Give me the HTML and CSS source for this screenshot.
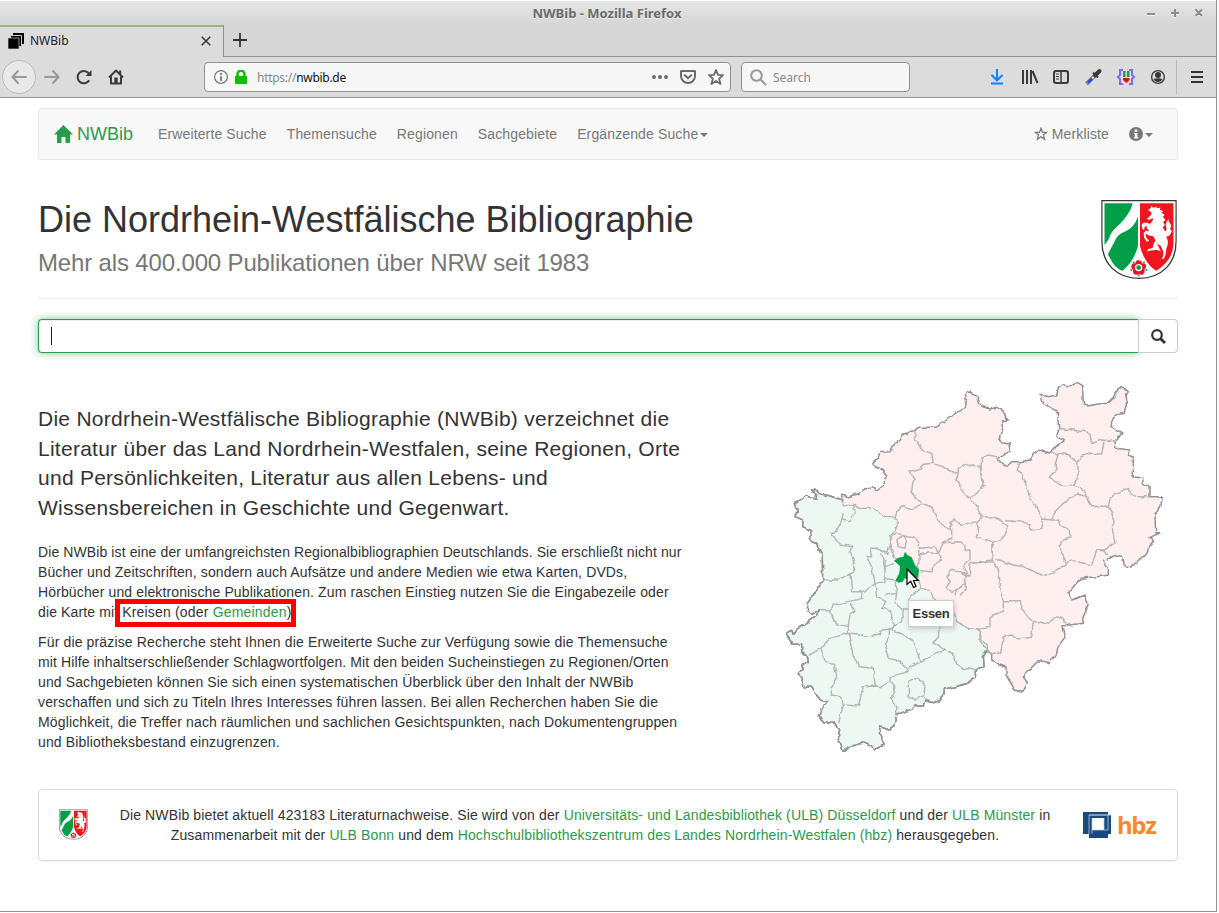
FILE: index.html
```html
<!DOCTYPE html>
<html lang="de">
<head>
<meta charset="utf-8">
<title>NWBib</title>
<link rel="stylesheet" href="styles.css">
</head>
<body>
<svg width="0" height="0" class="defs">
  <symbol id="wappen" viewBox="0 0 226 236">
    <path d="M2 2H224V122C224 190 180 234 113 234S2 190 2 122Z" fill="#fff" stroke="#393536" stroke-width="4"/>
    <path d="M10 10H94C90 30 78 45 68 58C50 80 35 85 26 108C23 118 16 126 10 135Z" fill="#009e49"/>
    <path d="M110 50V138C102 165 90 190 64 211C46 207 34 190 20 162C26 150 33 138 40 125C48 100 66 98 82 88C98 78 104 64 110 50Z" fill="#009e49"/>
    <path d="M116 10H216V130C214 170 194 192 165 211C138 197 124 166 116 138Z" fill="#ef1620"/>
    <path d="M140 30L148 24L150 17L155 23L164 20L166 24L177 23L175 30L186 33L180 38L190 45L184 50L192 60L185 66L190 75L184 82L190 92C194 96 197 88 194 80C190 70 197 65 201 56C200 69 211 70 209 81L205 86L211 92C208 105 200 112 193 108C202 120 200 135 195 144L192 164C190 172 186 178 180 175L185 169L186 155L178 137L164 130L170 136L178 154C166 145 150 151 137 153L140 147L154 143L156 132L162 122L158 111C152 105 146 108 139 104L132 101L135 113L143 122L136 125L128 112L127 98L134 91L144 94L136 83L136 77L130 81L128 90L122 84L121 75L126 68L137 68L146 72L154 61L155 54L143 60L137 56L149 45L151 37Z" fill="#fff"/>
    <g fill="#e6142a"><circle cx="112" cy="190" r="10"/><circle cx="100" cy="199" r="10"/><circle cx="105" cy="213" r="10"/><circle cx="120" cy="213" r="10"/><circle cx="124" cy="199" r="10"/></g>
    <circle cx="112" cy="202" r="11" fill="#fff"/><circle cx="112" cy="202" r="7" fill="#009e49"/>
    <g fill="#009e49"><circle cx="97" cy="187" r="3"/><circle cx="128" cy="187" r="3"/><circle cx="90" cy="209" r="3"/><circle cx="135" cy="209" r="3"/><circle cx="112" cy="225" r="3"/></g>
  </symbol>
</svg>
<div class="window">
  <header class="titlebar">
    <span class="title">NWBib - Mozilla Firefox</span>
    <svg class="winbtns" width="58" height="12" viewBox="0 0 58 12" fill="none" stroke="#8c8c8c" stroke-width="2"><path d="M0 7H8M24 6H32M28 2V10M48.500 2.500L55 9M55 2.500L48.500 9"/></svg>
  </header>
  <div class="tabs">
    <div class="tab">
      <svg width="16" height="16" viewBox="0 0 16 16"><path d="M5 0H16V11H5Z"/><path d="M2.500 2.500H13.500V13.500H2.500Z" stroke="#ccc"/><path d="M0 5H11V16H0Z" stroke="#ccc" stroke-width=".7"/></svg>
      <span>NWBib</span>
      <svg class="tabclose" width="10" height="10" viewBox="0 0 10 10" fill="none" stroke="#3b3b3b" stroke-width="1.600"><path d="M.7.7L9.300 9.300M9.300.7L.7 9.300"/></svg>
    </div>
    <div class="newtab"><svg width="14" height="14" viewBox="0 0 14 14" stroke="#333" stroke-width="1.800"><path d="M0 7H14M7 0V14"/></svg></div>
  </div>
  <div class="toolbar">
    <div class="back"><svg width="16" height="14" viewBox="0 0 16 14" fill="none" stroke="#999" stroke-width="2" stroke-linecap="round" stroke-linejoin="round"><path d="M15 7H1.500M7 1L1.500 7L7 13"/></svg></div>
    <svg class="fwd" width="16" height="14" viewBox="0 0 16 14" fill="none" stroke="#999" stroke-width="2" stroke-linecap="round" stroke-linejoin="round"><path d="M1 7H14.500M9 1L14.500 7L9 13"/></svg>
    <svg class="reload" width="16" height="16" viewBox="0 0 16 16" fill="none" stroke="#3a3a3a" stroke-width="2"><path d="M13.200 11.200A6.200 6.200 0 1 1 12.500 4"/><path d="M15.500 1V7H9.500Z" fill="#3a3a3a" stroke="none"/></svg>
    <svg class="home" width="16" height="16" viewBox="0 0 16 16" fill="none" stroke="#3a3a3a" stroke-width="2" stroke-linejoin="round"><path d="M1 8.500L8 1.500L15 8.500M3 7.500V14.500H13V7.500"/><path d="M6.300 14V8.500H9.700V14" fill="#3a3a3a" stroke="none"/><path d="M12.200 1.500V5"/></svg>
    <div class="field url">
      <svg width="14" height="14" viewBox="0 0 14 14" fill="none" stroke="#777"><circle cx="7" cy="7" r="6.400" stroke-width="1.200"/><path d="M7 6.300V11M7 3V5" stroke-width="1.800"/></svg>
      <svg class="lock" width="12" height="14" viewBox="0 0 12 14"><path d="M0 6H12V14H1Q0 14 0 13Z" fill="#12bc00"/><path d="M2.500 7V4A3.500 3.200 0 0 1 9.500 4V7" fill="none" stroke="#12bc00" stroke-width="2.400"/></svg>
      <span class="addr"><i>https://</i>nwbib.de</span>
      <svg class="dots" width="16" height="4" viewBox="0 0 16 4" fill="#6b6b6b"><circle cx="2" cy="2" r="2"/><circle cx="8" cy="2" r="2"/><circle cx="14" cy="2" r="2"/></svg>
      <svg class="pocket" width="16" height="14" viewBox="0 0 16 14" fill="none" stroke="#6b6b6b" stroke-width="2" stroke-linejoin="round" stroke-linecap="round"><path d="M1 1H15V6A7 7 0 0 1 1 6ZM4.800 5.200L8 8.200L11.200 5.200"/></svg>
      <svg class="star" width="16" height="16" viewBox="0 0 16 16" fill="none" stroke="#6b6b6b" stroke-width="1.800" stroke-linejoin="round"><path d="M8 1L10 5.800L15 6.200L11.200 9.700L12.500 15L8 12L3.500 15L4.800 9.700L1 6.200L6 5.800Z"/></svg>
    </div>
    <div class="field search">
      <svg width="17" height="17" viewBox="0 0 17 17" fill="none" stroke="#999" stroke-width="2"><circle cx="6.500" cy="6.500" r="5.300"/><path d="M10.300 10.300L16 16"/></svg>
      <span>Search</span>
    </div>
    <svg class="tools" width="176" height="20" viewBox="0 0 176 20" fill="none" stroke="#3a3a3a">
      <path d="M7 2V13M1.500 8L7 13.300L12.500 8M1 16.500H13" stroke="#0a84ff" stroke-width="2"/>
      <path d="M33 3V17M37 3V17M41 3V17M42.500 4L47.500 16" stroke-width="2"/>
      <rect x="64" y="4" width="14" height="12" rx="2" stroke-width="2"/><path d="M71 4V16" stroke-width="1.500"/><path d="M66 7H69M66 9.500H69M66 12H69"/>
      <path d="M96.500 17L105 8.500" stroke="#858585" stroke-width="4"/><path d="M98.500 15L104 9.500" stroke="#dcdcdc" stroke-width="2"/><path d="M98 15.500L102 11.500" stroke="#2742e0" stroke-width="2.500"/>
      <path d="M105 8.500L109.500 4" stroke-width="4" stroke-linecap="round"/><path d="M103 5.500L108 10.500" stroke-width="2"/>
      <g stroke="#7b6fe8" stroke-width="2"><path d="M133 3H130V8L128 10L130 12V17H133M139 3H142V8L144 10L142 12V17H139"/></g>
      <path d="M134.300 4V10M138.200 4V10" stroke="#1c9b38" stroke-width="2.400"/><path d="M133 11H139.500V13L136.300 16L133 13Z" fill="#f00" stroke="none"/>
      <circle cx="168" cy="10" r="6.400" stroke-width="1.400"/><g fill="#3a3a3a" stroke="none"><circle cx="168" cy="8" r="3"/><path d="M163.500 12Q168 10.500 172.500 12Q171 15 168 15T163.500 12Z"/></g>
    </svg>
    <div class="menu"><svg width="12" height="12" viewBox="0 0 12 12" stroke="#333" stroke-width="2"><path d="M0 1H12M0 6H12M0 11H12"/></svg></div>
  </div>
  <main class="page">
    <nav class="navbar">
      <a class="brand"><svg width="19" height="18" viewBox="0 0 19 18"><path d="M9.500 0L19 9.500H16V18H11.500V12H7.500V18H3V9.500H0Z" fill="#2c9a4b"/></svg><span>NWBib</span></a>
      <a>Erweiterte Suche</a><a>Themensuche</a><a>Regionen</a><a>Sachgebiete</a><a>Ergänzende Suche<b class="caret"></b></a>
      <a class="merk"><svg width="14" height="14" viewBox="0 0 14 14" fill="none" stroke="#777" stroke-width="1.200"><path d="M7 1.300L8.500 5.300H12.800L9.400 8L10.700 12.300L7 9.800L3.300 12.300L4.600 8L1.200 5.300H5.500Z"/></svg>Merkliste</a>
      <a class="info"><svg width="14" height="14" viewBox="0 0 14 14"><circle cx="7" cy="7" r="7" fill="#777"/><path d="M5.600 2.500H8.400V4.800H5.600ZM5 6H8.400V10H9.300V11.500H4.900V10H5.800V7.300H5Z" fill="#f8f8f8"/></svg><b class="caret"></b></a>
    </nav>
    <div class="head">
      <div><h1>Die Nordrhein-Westfälische Bibliographie</h1><p class="sub">Mehr als 400.000 Publikationen über NRW seit 1983</p></div>
      <svg class="coat" width="76" height="79" viewBox="0 0 226 236"><use href="#wappen"/></svg>
    </div>
    <div class="searchrow"><div class="input"><span class="textcaret"></span></div><div class="go"><svg width="15" height="15" viewBox="0 0 15 15" fill="none" stroke="#333" stroke-width="2.200"><circle cx="6" cy="6" r="4.800"/><path d="M9.400 9.400L14 14" stroke-width="2.800"/></svg></div></div>
    <div class="content">
      <div class="copy">
        <p class="lead">Die Nordrhein-Westfälische Bibliographie (NWBib) verzeichnet die<br>Literatur über das Land Nordrhein-Westfalen, seine Regionen, Orte<br>und Persönlichkeiten, Literatur aus allen Lebens- und<br>Wissensbereichen in Geschichte und Gegenwart.</p>
        <p class="intro"><span class="tight">Die NWBib ist eine der umfangreichsten Regionalbibliographien Deutschlands. Sie erschließt nicht nur</span><br>Bücher und Zeitschriften, sondern auch Aufsätze und andere Medien wie etwa Karten, DVDs,<br>Hörbücher und elektronische Publikationen. Zum raschen Einstieg nutzen Sie die Eingabezeile oder<br>die Karte mit <span class="mark">Kreisen (oder <a>Gemeinden</a>)</span></p>
        <p class="detail">Für die präzise Recherche steht Ihnen die Erweiterte Suche zur Verfügung sowie die Themensuche<br><span class="tight">mit Hilfe inhaltserschließender Schlagwortfolgen. Mit den beiden Sucheinstiegen zu Regionen/Orten</span><br><span class="tight">und Sachgebieten können Sie sich einen systematischen Überblick über den Inhalt der NWBib</span><br>verschaffen und sich zu Titeln Ihres Interesses führen lassen. Bei allen Recherchen haben Sie die<br>Möglichkeit, die Treffer nach räumlichen und sachlichen Gesichtspunkten, nach Dokumentengruppen<br>und Bibliotheksbestand einzugrenzen.</p>
      </div>
      <div class="map">
        <svg width="390" height="390" viewBox="0 0 1170 1170" fill="none" stroke-linejoin="round">
          <defs><filter id="rough" x="0" y="0" width="100%" height="100%" color-interpolation-filters="sRGB"><feTurbulence type="fractalNoise" baseFrequency=".045" numOctaves="2" seed="4"/><feDisplacementMap in="SourceGraphic" scale="13" xChannelSelector="R" yChannelSelector="G"/></filter></defs>
          <g filter="url(#rough)">
          <path fill="#ffefef" stroke="#929292" stroke-width="4.500" d="M185 375L205 380 240 368 275 350 290 360 310 345 322 320 305 300 275 283 280 272 295 265 300 247 330 245 345 220 360 212 370 192 400 185 415 172 470 172 485 160 500 150 525 130 555 115 562 92 553 85 565 65 590 75 600 100 630 117 650 112 670 123 675 145 685 150 668 152 670 170 665 185 658 205 665 218 692 222 690 245 653 265 665 283 682 288 695 275 720 275 750 270 760 250 775 240 812 250 820 235 850 212 830 200 836 175 832 125 815 115 790 100 783 73 805 80 830 75 835 55 848 45 865 50 892 37 908 47 910 105 925 108 950 103 985 100 1000 85 1015 55 1030 52 1045 65 1038 80 1042 98 1035 110 1030 130 1010 135 995 155 993 170 1025 188 1012 212 1005 215 1008 235 1050 240 1045 258 1060 265 1060 320 1088 325 1090 340 1110 350 1110 380 1147 380 1143 405 1125 435 1127 488 1142 488 1110 502 1120 512 1105 535 1100 555 1070 570 1068 582 1045 590 1032 585 1028 560 1010 555 968 572 985 595 985 615 950 620 902 625 880 650 863 672 878 690 915 675 925 705 908 745 910 760 845 768 855 800 835 830 830 850 810 878 775 872 730 918 742 940 728 968 705 960 678 915 678 890 658 885 635 870 635 850 622 840 610 860 612 888 585 905 588 920 560 940 525 950 490 958 485 990 460 998 435 992 430 1005 405 1005 395 1018 350 1032 345 1070 330 1080 300 1070 298 1090 312 1125 280 1140 275 1130 250 1118 205 1130 190 1145 182 1120 172 1115 180 1100 175 1080 165 1060 130 1058 118 1038 125 1020 143 995 120 990 110 975 95 952 72 950 65 925 53 912 70 895 65 888 85 875 82 855 65 845 65 822 35 823 32 810 18 790 35 780 40 795 55 775 85 755 110 735 115 722 95 730 83 720 82 700 100 675 128 635 127 555 110 525 88 505 95 482 68 470 70 450 45 440 55 420 43 400 58 392 78 378 85 380 108 388 110 372 95 360 115 362 120 372 150 378 185 390Z"/>
          <path fill="#edf8f3" stroke="#b5b5b5" stroke-width="3.800" d="M185 390L195 408 220 402 232 412 265 412 300 425 315 440 345 440 355 455 345 485 333 495 330 515 337 535 345 560 412 625 425 655 450 660 460 685 480 700 525 735 530 755 565 775 595 775 605 805 622 825 622 840 610 860 612 888 585 905 588 920 560 940 525 950 490 958 485 990 460 998 435 992 430 1005 405 1005 395 1018 350 1032 345 1070 330 1080 300 1070 298 1090 312 1125 280 1140 275 1130 250 1118 205 1130 190 1145 182 1120 172 1115 180 1100 175 1080 165 1060 130 1058 118 1038 125 1020 143 995 120 990 110 975 95 952 72 950 65 925 53 912 70 895 65 888 85 875 82 855 65 845 65 822 35 823 32 810 18 790 35 780 40 795 55 775 85 755 110 735 115 722 95 730 83 720 82 700 100 675 128 635 127 555 110 525 88 505 95 482 68 470 70 450 45 440 55 420 43 400 58 392 78 378 85 380 108 388 110 372 95 360 115 362 120 372 150 378Z"/>
          <path stroke="#929292" stroke-width="4.500" d="M622 840L610 860 612 888 585 905 588 920 560 940 525 950 490 958 485 990 460 998 435 992 430 1005 405 1005 395 1018 350 1032 345 1070 330 1080 300 1070 298 1090 312 1125 280 1140 275 1130 250 1118 205 1130 190 1145 182 1120 172 1115 180 1100 175 1080 165 1060 130 1058 118 1038 125 1020 143 995 120 990 110 975 95 952 72 950 65 925 53 912 70 895 65 888 85 875 82 855 65 845 65 822 35 823 32 810 18 790 35 780 40 795 55 775 85 755 110 735 115 722 95 730 83 720 82 700 100 675 128 635 127 555 110 525 88 505 95 482 68 470 70 450 45 440 55 420 43 400 58 392 78 378 85 380 108 388 110 372 95 360 115 362 120 372 150 378 185 390"/>
          <g stroke="#b7b5b5" stroke-width="4.300">
            <path d="M405 182V205L420 225 425 240 455 250 460 280M345 440L350 425 370 410 390 418 430 400 405 385 395 360 402 325 390 305 420 295 430 283 460 280 500 295 510 303 535 310 535 295 560 280 590 290 603 292 605 320 612 345 590 370 570 385 545 365 535 335 527 330 535 310M603 292L605 265 625 255 655 262M570 385L590 410 605 442M430 400L455 412 470 440 480 460 515 480 510 455 520 447 545 463 590 455 605 442 640 440 665 455 685 470 675 495 660 512 638 520M590 455L595 480 588 500 610 505 635 515 637 570 572 578M515 480V505L485 518"/>
            <g transform="translate(270 420)"><path d="M65 80L80 70 100 75 110 90 105 115 85 110 80 90 95 78M65 80L60 100 65 125 75 145M100 75L130 80 145 100 147 145 145 180M148 115L180 112 195 108 205 130 215 150 190 165 185 185 150 182M205 130L220 98 270 95 285 105 285 120 300 125 300 150 280 165 290 190 240 180 230 200 240 215 228 235 245 245 260 235 255 255M145 135L180 128 205 130M290 190L285 220 270 232 260 235"/></g>
            <g transform="translate(600)"><path d="M235 175L280 180 300 185 315 180 330 195 335 220 360 210 408 213M215 250H240L265 255 280 268 293 275 300 262 330 250 365 252 372 215M235 252L225 285 232 295 208 325 250 347 280 345 295 320 293 275M120 275L112 300 125 310 140 350 150 385 170 410 188 447 215 450 220 430 250 400 290 372 322 380 300 350 280 345M322 380L335 410 385 408 390 385 408 370 445 355 450 370 470 380 510 380M385 408L400 430 397 480 405 520 370 542 350 540 345 560 335 585 280 572 258 577 238 530 245 515 270 500 268 480 240 468 235 450 215 450M188 447L182 475 152 480 150 462 120 455 75 452M0 285L5 330 15 350 0 360"/></g>
            <g transform="translate(540 510)"><path d="M97 10V60L112 85 120 150 130 182 185 182 185 210 220 243 255 253 280 235 300 230 320 250M105 60H120L160 75 190 80 245 105 285 95 320 70M130 182V212L90 230 90 262 55 268 62 300 82 330 100 340 122 340 130 290 155 285 170 297 215 292 220 243M0 250L25 262 55 268M30 70L97 65M30 70L28 105 0 100M18 105L15 150 0 165M405 30L430 30 440 45"/></g>
            <path d="M220 402L225 425 210 455 185 450 190 432M185 450L170 485 152 492 180 525 215 530 210 545 220 570 222 600M265 570L262 560 275 560 270 535 290 535 320 550 330 515M305 550L315 600"/>
            <g transform="translate(0 570)"><path d="M128 60H175L210 40 225 30 220 0M210 40L215 95 245 95 275 80 285 70 275 20 265 0M315 0V65L285 70M315 20L345 10M315 55L345 60 350 100 345 130 370 150M245 95L248 115 190 128 160 135 152 152 118 152M152 152L165 190 205 200 210 165 225 155 212 130M285 70L290 110 318 125 305 145 335 150 335 175 345 195 325 208 305 210 300 222 265 232 235 222 205 220 205 200M205 220L150 235 122 265 85 288M122 265L135 305 160 310 170 350 152 385 155 405 180 410 190 435 235 438 250 380 285 378 280 325 240 320 220 290 205 220M190 435L175 490M325 208L325 235 315 258 325 295 350 300 380 325 385 335 330 350 330 365 305 380 285 378M325 208L355 215 380 230 400 240 415 285 420 305 495 268 480 258 460 250 475 230 478 200M385 325L420 305M495 268L520 280 525 305 550 325 585 330M330 365L345 380 335 410 350 440 350 460M385 365L400 355 430 365 435 385 430 410 435 422M385 365V410L410 420 430 405M385 125L400 100 425 85M370 150L365 185 335 205M385 150L370 150M350 100L320 105"/></g>
          </g>
          </g>
          <path transform="translate(270 420)" fill="#00a24b" d="M105 125L112 135 125 142 135 165 147 180 145 200 130 212 105 205 98 215 85 218 77 210 88 190 90 168 72 152 85 143 100 140Z"/>
        </svg>
        <div class="tip">Essen</div>
        <svg class="pointer" width="14" height="21" viewBox="0 0 14 21"><path d="M1 1V16.500L4.700 13.200L7.500 19.500L10 18.400L7.500 12.500H12.300Z" fill="#fff" stroke="#000" stroke-width="1.200"/></svg>
      </div>
    </div>
    <footer class="foot">
      <svg class="mini" width="29" height="31" viewBox="0 0 226 236"><use href="#wappen"/></svg>
      <p>Die NWBib bietet aktuell 423183 Literaturnachweise. Sie wird von der <a>Universitäts- und Landesbibliothek (ULB) Düsseldorf</a> und der <a>ULB Münster</a> in<br>Zusammenarbeit mit der <a>ULB Bonn</a> und dem <a>Hochschulbibliothekszentrum des Landes Nordrhein-Westfalen (hbz)</a> herausgegeben.</p>
      <div class="hbz"><svg width="28" height="26" viewBox="0 0 28 26"><path d="M0 0H25V3H28V22H25V26H6V22H0Z" fill="#174a80"/><path d="M9 6H21V18H9Z" fill="#fff"/><path d="M6 22V3H28M6 3H25V18H9V22M9 6V18M21 6V18" fill="none" stroke="#b7cbe0" stroke-width=".8"/></svg><span>hbz</span></div>
    </footer>
  </main>
</div>
</body>
</html>
```
FILE: styles.css
```css
*, *::before { box-sizing: border-box; }
body { margin: 0; background: #fff; font: 14px/20px "Liberation Sans", Arial, sans-serif; color: #333; }
.defs { position: absolute; }
p, h1 { margin: 0; font-weight: 400; }
svg { display: block; flex: none; }
.window { width: 1217px; height: 912px; border-right: 1px solid #929292; border-bottom: 1px solid #929292; overflow: hidden; }
.titlebar { position: relative; height: 25px; background: linear-gradient(#fff 0 1px, #e6e6e6 1px, #d6d6d6); text-align: center; font: bold 13px/26px "Noto Sans", sans-serif; color: #6b6b6b; text-shadow: 0 1px #eee; }
.title { margin-left: -2px; }
.winbtns { position: absolute; left: 1147px; top: 7px; filter: drop-shadow(0 1px #f2f2f2); }
.tabs { display: flex; height: 32px; background: #d6d6d6; font: 12px/30px "Noto Sans", sans-serif; color: #222; }
.tab { width: 224px; margin-top: -1px; height: 33px; display: flex; align-items: center; background: #dcdcdc; border-top: 1px solid #929292; border-right: 1px solid #929292; box-shadow: inset 0 2px #9ab87c; padding: 0 12px 0 8px; gap: 6px; }
.tabclose { margin-left: auto; }
.newtab { flex: 1; border-bottom: 1px solid #929292; padding: 8px 9px; }
.toolbar { display: flex; align-items: center; height: 41px; background: #dcdcdc; border-bottom: 1px solid #929292; padding: 0 13px 0 2px; }
.back { width: 34px; height: 34px; border: 1px solid #bbb; border-radius: 50%; background: #e8e8e8; display: grid; place-items: center; }
.fwd { margin-left: 8px; }
.reload { margin-left: 16px; }
.home { margin-left: 16px; }
.field { display: flex; align-items: center; height: 30px; border: 1px solid #929292; border-radius: 4px; background: #f7f7f7; font: 12px/28px "Noto Sans", sans-serif; }
.url { width: 527px; margin-left: 80px; padding: 0 6px 0 9px; color: #111; }
.lock { margin-left: 7px; }
.addr { margin-left: 10px; letter-spacing: -.28px; padding-top: 1px; }
.addr i { font-style: normal; color: #888; }
.dots { margin-left: auto; }
.pocket { margin-left: 12px; }
.star { margin-left: 12px; }
.search { width: 169px; margin-left: 10px; padding: 0 8px; gap: 6px; color: #888; }
.search span { padding-top: 1px; }
.tools { margin-left: 80px; }
.menu { margin-left: auto; height: 34px; width: 27px; border-left: 1px solid #bbb; display: flex; align-items: center; padding-left: 14px; }
.page { padding: 10px 38px 0; }
.navbar { display: flex; align-items: center; height: 52px; border: 1px solid #e7e7e7; border-radius: 4px; background: #f8f8f8; padding: 0 24px 0 15px; gap: 20px; color: #777; white-space: nowrap; letter-spacing: .13px; }
.navbar a { display: flex; align-items: center; color: #777; }
.navbar .brand { color: #2c9a4b; font-size: 18px; letter-spacing: 0; gap: 4px; margin-right: 5px; }
.caret { border: 4px solid transparent; border-top-color: #777; border-bottom: 0; margin: 2px 0 0 2px; }
.merk { margin-left: auto; gap: 4px; }
.head { display: flex; justify-content: space-between; height: 139px; border-bottom: 1px solid #eee; padding-top: 39px; white-space: nowrap; }
h1 { font-size: 36px; line-height: 42px; }
.sub { font-size: 24px; line-height: 28px; color: #777; margin-top: 8px; letter-spacing: -.15px; }
.coat { margin: 1px 1px 0 0; }
.searchrow { display: flex; height: 34px; margin-top: 20px; }
.input { flex: 1; border: 1px solid #2c9a4b; border-right-color: #ccc; border-radius: 4px 0 0 4px; box-shadow: inset 0 1px 1px rgba(0,0,0,.075), 0 0 8px rgba(44,154,75,.6); padding: 7px 12px; }
.textcaret { display: block; width: 1px; height: 18px; background: #222; }
.go { position: relative; width: 39px; border: 1px solid #ccc; border-left: 0; border-radius: 0 4px 4px 0; display: grid; place-items: center; background: #fff; }
.content { display: flex; height: 436px; }
.copy { flex: none; width: 742px; padding-top: 51px; white-space: nowrap; }
.copy p { margin-bottom: 10px; }
.copy .lead { font-size: 21px; line-height: 29.500px; margin-bottom: 20px; letter-spacing: .26px; }
.intro { letter-spacing: .125px; }
.intro .tight { letter-spacing: .1px; }
.detail { letter-spacing: .145px; }
.detail .tight { letter-spacing: .115px; }
a { color: #2c9a4b; }
.mark { position: relative; }
.mark::before { content: ""; position: absolute; left: -7px; top: -5px; width: 181px; height: 28px; border: 5px solid #f00; }
.mark { letter-spacing: .18px; }
.map { position: relative; margin-top: 17px; width: 390px; height: 390px; }
.tip { position: absolute; left: 128px; top: 230px; width: 46px; height: 27px; background: #fff; border: 1px solid #ccc; box-shadow: 1px 2px 5px rgba(0,0,0,.2); font: bold 13px/26px "Liberation Sans", sans-serif; letter-spacing: -.3px; text-align: center; }
.pointer { position: absolute; left: 126px; top: 198px; }
.foot { display: flex; height: 72px; border: 1px solid #ddd; border-radius: 4px; box-shadow: 0 1px 1px rgba(0,0,0,.05); white-space: nowrap; }
.mini { margin: 19px 0 0 20px; }
.foot p { flex: 1; padding: 15px 1px 0 0; text-align: center; letter-spacing: .13px; }
.hbz { display: flex; gap: 6px; width: 73px; margin: 22px 21px 0 0; height: 27px; font: bold 24px/26px "Open Sans", sans-serif; letter-spacing: -1.4px; color: #f6892b; }
```
